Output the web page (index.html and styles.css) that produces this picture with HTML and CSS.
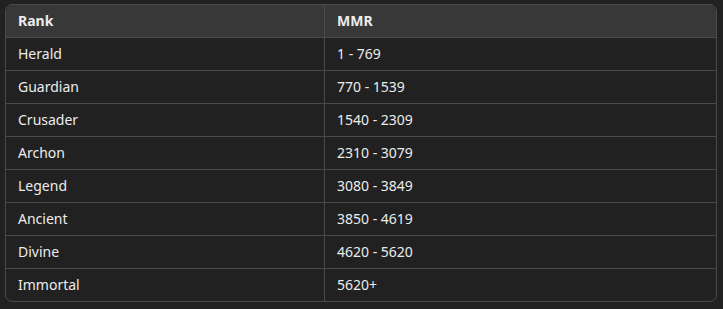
FILE: index.html
```html
<!DOCTYPE html>
<html>
<head>
<meta charset="utf-8">
<link rel="stylesheet" href="styles.css">
</head>
<body>
<div class="wrap">
<table class="ranks">
<thead>
<tr><th>Rank</th><th>MMR</th></tr>
</thead>
<tbody>
<tr><td>Herald</td><td>1 - 769</td></tr>
<tr><td>Guardian</td><td>770 - 1539</td></tr>
<tr><td>Crusader</td><td>1540 - 2309</td></tr>
<tr><td>Archon</td><td>2310 - 3079</td></tr>
<tr><td>Legend</td><td>3080 - 3849</td></tr>
<tr><td>Ancient</td><td>3850 - 4619</td></tr>
<tr><td>Divine</td><td>4620 - 5620</td></tr>
<tr><td>Immortal</td><td>5620+</td></tr>
</tbody>
</table>
</div>
</body>
</html>
```
FILE: styles.css
```css
html, body {
  margin: 0;
  padding: 0;
  background: #212121;
}
body {
  font-family: "Noto Sans", "Open Sans", sans-serif;
  font-size: 14px;
  color: #ececec;
}
.wrap {
  padding: 4px 6px 0 5px;
}
.ranks {
  width: 712px;
  border-collapse: separate;
  border-spacing: 0;
  border: 1px solid #4a4a4a;
  border-radius: 7px;
  overflow: hidden;
  background: #212121;
}
.ranks th, .ranks td {
  padding: 0 12px;
  text-align: left;
  vertical-align: middle;
  border-bottom: 1px solid #4a4a4a;
  line-height: 20px;
  box-sizing: border-box;
}
.ranks th {
  height: 33px;
  background: #383838;
  font-weight: 700;
}
.ranks td {
  height: 33px;
}
.ranks tbody tr:last-child td {
  border-bottom: none;
  height: 32px;
}
.ranks th:first-child, .ranks td:first-child {
  width: 319px;
  border-right: 1px solid #4a4a4a;
}
```
